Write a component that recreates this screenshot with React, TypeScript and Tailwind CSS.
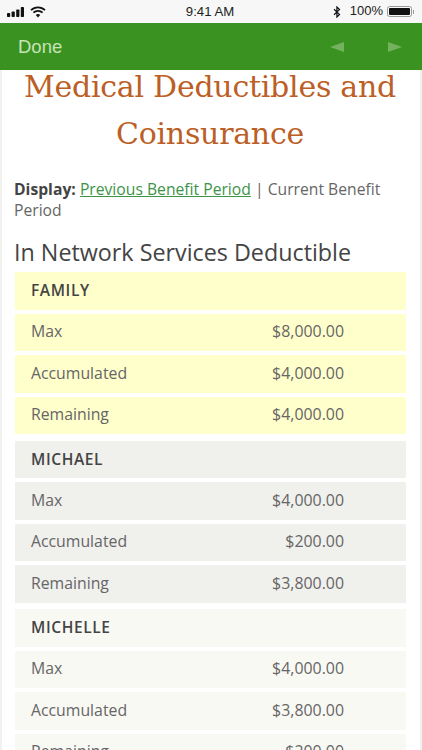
const sans = "font-['Open_Sans','Noto_Sans',sans-serif]";

type Row = [string, string];
type Group = { name: string; bg: string; rows: Row[] };

const groups: Group[] = [
  {
    name: "FAMILY",
    bg: "bg-[#ffffcc]",
    rows: [
      ["Max", "$8,000.00"],
      ["Accumulated", "$4,000.00"],
      ["Remaining", "$4,000.00"],
    ],
  },
  {
    name: "MICHAEL",
    bg: "bg-[#f0f0ed]",
    rows: [
      ["Max", "$4,000.00"],
      ["Accumulated", "$200.00"],
      ["Remaining", "$3,800.00"],
    ],
  },
  {
    name: "MICHELLE",
    bg: "bg-[#f9f9f4]",
    rows: [
      ["Max", "$4,000.00"],
      ["Accumulated", "$3,800.00"],
      ["Remaining", "$200.00"],
    ],
  },
];

function StatusBar() {
  return (
    <div className="h-[23px] bg-[#f7f7f7] flex items-center justify-between pl-[7px] pr-[8px] font-['Liberation_Sans',sans-serif] text-[13px] text-[#222]">
      <div className="flex items-center gap-[5px] w-[120px]">
        <svg width="18" height="10" viewBox="0 0 18 10" fill="#111">
          <rect x="0" y="6" width="3.2" height="4" rx="0.8" />
          <rect x="4.6" y="4.5" width="3.2" height="5.5" rx="0.8" />
          <rect x="9.2" y="2.5" width="3.2" height="7.5" rx="0.8" />
          <rect x="13.8" y="0" width="3.2" height="10" rx="0.8" />
        </svg>
        <svg width="16" height="12" viewBox="0 0 16 12" fill="none" stroke="#111" strokeWidth="1.8">
          <path d="M1 4.2a10 10 0 0 1 14 0" />
          <path d="M3.4 6.7a6.6 6.6 0 0 1 9.2 0" />
          <path d="M8 11.5 5.8 9.1a3.2 3.2 0 0 1 4.4 0Z" fill="#111" stroke="none" />
        </svg>
      </div>
      <span className="text-[13.2px] -ml-[1px]">9:41 AM</span>
      <div className="flex items-center justify-end w-[120px] gap-[4px]">
        <svg width="8" height="12" viewBox="0 0 8 12" fill="none" stroke="#111" strokeWidth="1.2" className="mr-[5px]">
          <path d="M1 3.2 6.5 8.4 3.9 11V1l2.6 2.6L1 8.8" />
        </svg>
        <span className="text-[13px] -mt-[2px]">100%</span>
        <div className="flex items-center">
          <div className="w-[25px] h-[11px] rounded-[2.5px] border border-[#999] p-[1px]">
            <div className="w-full h-full bg-[#111] rounded-[1px]" />
          </div>
          <div className="w-[1px] h-[4px] bg-[#999] ml-[1px]" />
        </div>
      </div>
    </div>
  );
}

function Toolbar() {
  return (
    <div className="h-[47px] bg-[#3a9320] flex items-center justify-between pl-[18px] pr-[20px] font-['Liberation_Sans',sans-serif]">
      <span className="text-[18.5px] text-[#c6e4b8]">Done</span>
      <div className="flex items-center gap-[44px]">
        <svg width="14" height="10" viewBox="0 0 14 10" fill="#74b25f">
          <path d="M0 5 14 0v10Z" />
        </svg>
        <svg width="14" height="10" viewBox="0 0 14 10" fill="#74b25f">
          <path d="M14 5 0 0v10Z" />
        </svg>
      </div>
    </div>
  );
}

function Item({ bg, label, value, head }: { bg: string; label: string; value?: string; head?: boolean }) {
  return (
    <div className={`${bg} h-[37.5px] flex items-center pl-[16px] pr-[62px] justify-between`}>
      <span className={head ? "text-[15.5px] font-semibold tracking-[0.6px] text-[#444]" : "text-[15.8px] text-[#666]"}>{label}</span>
      {value ? <span className="text-[15.9px] text-[#666]">{value}</span> : null}
    </div>
  );
}

export default function App() {
  return (
    <div className="w-[422px] h-[750px] overflow-hidden bg-[#f1f1ef] flex flex-col">
      <StatusBar />
      <Toolbar />
      <div className={`mx-[2px] flex-1 bg-white pl-[12px] pr-[14px] overflow-hidden ${sans}`}>
        <h1 className="font-['DejaVu_Serif',serif] text-[#bc5f26] text-[30px] leading-[47px] text-center -mt-[7px] -mx-[8px] tracking-[-0.25px]">
          Medical Deductibles and Coinsurance
        </h1>
        <p className="mt-[22px] text-[15.7px] leading-[21px] text-[#666]">
          <b className="font-bold text-[#444]">Display:</b>{" "}
          <a className="text-[#3d9448] underline">Previous Benefit Period</a> | Current Benefit Period
        </p>
        <h2 className="mt-[16px] text-[23.3px] font-medium leading-[30px] text-[#444]">In Network Services Deductible</h2>
        <div className="mt-[5px] ml-[1px] flex flex-col gap-[6.5px]">
          {groups.map((g) => (
            <div key={g.name} className="flex flex-col gap-[4px]">
              <Item bg={g.bg} label={g.name} head />
              {g.rows.map((r) => (
                <Item key={r[0]} bg={g.bg} label={r[0]} value={r[1]} />
              ))}
            </div>
          ))}
        </div>
      </div>
    </div>
  );
}
